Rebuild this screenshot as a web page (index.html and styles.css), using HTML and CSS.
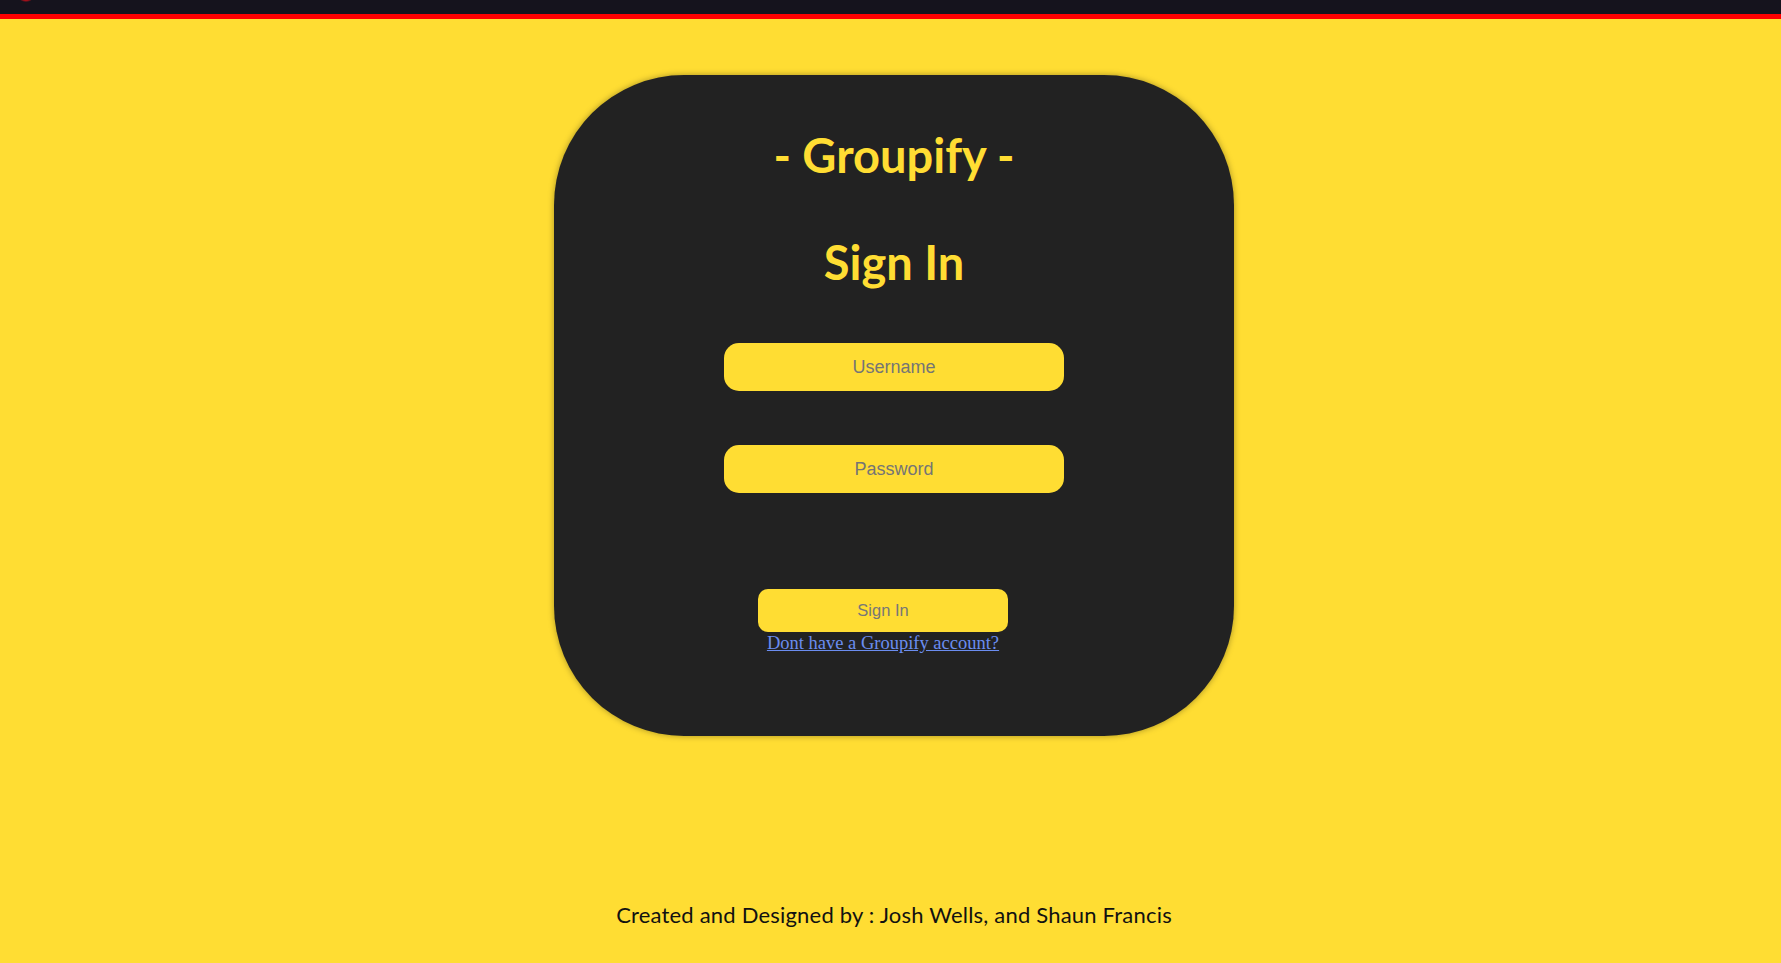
FILE: index.html
```html
<!DOCTYPE html>
<html lang="en">
<head>
<meta charset="utf-8">
<title>Groupify - Sign In</title>
<link rel="stylesheet" href="styles.css">
</head>
<body>
<header class="topbar">
  <span class="topbar-glow"></span>
</header>
<main class="page">
  <section class="card">
    <h1 class="brand">- Groupify -</h1>
    <h2 class="heading">Sign In</h2>
    <form class="form">
      <input class="field" type="text" placeholder="Username">
      <input class="field field-password" type="password" placeholder="Password">
      <div class="submit-block">
        <button class="submit" type="button">Sign In</button>
        <a class="signup-link" href="#">Dont have a Groupify account?</a>
      </div>
    </form>
  </section>
</main>
<footer class="credits">Created and Designed by : Josh Wells, and Shaun Francis</footer>
</body>
</html>
```

FILE: styles.css
```css
html, body {
  margin: 0;
  padding: 0;
}

body {
  background: #ffdd33;
  min-height: 963px;
  font-family: "Liberation Sans", Arial, sans-serif;
}

.topbar {
  position: relative;
  height: 14px;
  background: #15131d;
  border-bottom: 5px solid #ff0000;
  overflow: hidden;
}

.topbar-glow {
  position: absolute;
  left: 19px;
  top: -7px;
  width: 14px;
  height: 9px;
  border-radius: 50%;
  background: radial-gradient(ellipse at center, #e0101a 0%, #b0101a 45%, rgba(21, 19, 29, 0) 75%);
}

.page {
  display: flex;
  justify-content: center;
  padding-top: 56px;
  padding-left: 7px;
}

.card {
  box-sizing: border-box;
  width: 680px;
  height: 661px;
  background: #222222;
  border-radius: 130px;
  box-shadow: 0 0 6px rgba(0, 0, 0, 0.35);
  padding-top: 52px;
  display: flex;
  flex-direction: column;
  align-items: center;
}

.brand,
.heading {
  margin: 0;
  font-family: "Lato", "DejaVu Sans", sans-serif;
  font-weight: 700;
  font-size: 47px;
  line-height: 56px;
  color: #ffdd33;
  text-align: center;
}

.heading {
  margin-top: 51px;
}

.form {
  display: flex;
  flex-direction: column;
  align-items: center;
  margin-top: 53px;
}

.field {
  box-sizing: border-box;
  width: 340px;
  height: 48px;
  border: none;
  border-radius: 15px;
  background: #ffdd33;
  font-family: "Liberation Sans", Arial, sans-serif;
  font-size: 18px;
  text-align: center;
  color: #333;
  outline: none;
  padding: 0 12px;
}

.field::placeholder {
  color: #757575;
}

.field-password {
  margin-top: 54px;
}

.submit-block {
  display: flex;
  flex-direction: column;
  align-items: center;
  margin-top: 96px;
  margin-right: 22px;
}

.submit {
  box-sizing: border-box;
  width: 250px;
  height: 43px;
  border: none;
  border-radius: 10px;
  background: #ffdd33;
  color: #777777;
  font-family: "Liberation Sans", Arial, sans-serif;
  font-size: 16.5px;
  padding-bottom: 2px;
  cursor: pointer;
}

.signup-link {
  margin-top: 1px;
  font-family: "Liberation Serif", "Times New Roman", serif;
  font-size: 18.5px;
  line-height: 21px;
  color: #6b8df0;
  text-decoration: underline;
}

.credits {
  margin-top: 166px;
  padding-left: 7px;
  text-align: center;
  font-family: "Lato", "Noto Sans", sans-serif;
  font-size: 22px;
  letter-spacing: 0.2px;
  line-height: 26px;
  color: #111111;
}
```
